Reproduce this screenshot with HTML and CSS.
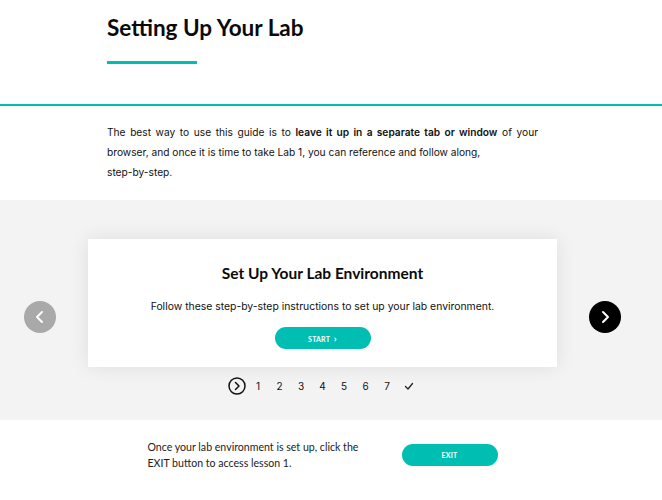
FILE: index.html
```html
<!DOCTYPE html>
<html lang="en">
<head>
  <meta charset="UTF-8" />
  <title>Setting Up Your Lab</title>
  <link rel="stylesheet" href="styles.css">
</head>
<body>
  <!-- Lesson header -->
  <div class="lesson-header">
    <div class="wrap">
      <div class="column">
        <h1>Setting Up Your Lab</h1>
        <div class="title-rule"></div>
      </div>
    </div>
  </div>

  <!-- Intro text -->
  <div class="intro">
    <div class="wrap">
      <p class="column intro-text">The best way to use this guide is to <strong>leave it up in a separate tab or window</strong> of your browser, and once it is time to take Lab 1, you can reference and follow along,<br>step-by-step.</p>
    </div>
  </div>

  <!-- Process carousel -->
  <div class="process">
    <div class="wrap carousel">
      <button class="arrow arrow-prev" aria-label="Previous">
        <svg width="12" height="14" viewBox="0 0 12 14"><polyline points="8,2 3,7 8,12" fill="none" stroke="#fff" stroke-width="2" stroke-linecap="round" stroke-linejoin="round"/></svg>
      </button>
      <div class="slides">
        <div class="card">
          <h2>Set Up Your Lab Environment</h2>
          <p>Follow these step-by-step instructions to set up your lab environment.</p>
          <button class="pill-btn">START <span class="chev">&#x203A;</span></button>
        </div>
        <ul class="steps">
          <li class="step-current">
            <svg width="18" height="18" viewBox="0 0 18 18"><circle cx="9" cy="9" r="8" fill="none" stroke="#111" stroke-width="1.5"/><polyline points="7.5,5.5 11,9 7.5,12.5" fill="none" stroke="#111" stroke-width="1.5" stroke-linecap="round" stroke-linejoin="round"/></svg>
          </li>
          <li>1</li>
          <li>2</li>
          <li>3</li>
          <li>4</li>
          <li>5</li>
          <li>6</li>
          <li>7</li>
          <li>
            <svg width="10" height="10" viewBox="0 0 10 10"><polyline points="1.5,5.5 4,8 8.5,2.5" fill="none" stroke="#222" stroke-width="1.3" stroke-linecap="round" stroke-linejoin="round"/></svg>
          </li>
        </ul>
      </div>
      <button class="arrow arrow-next" aria-label="Next">
        <svg width="12" height="14" viewBox="0 0 12 14"><polyline points="4,2 9,7 4,12" fill="none" stroke="#fff" stroke-width="2" stroke-linecap="round" stroke-linejoin="round"/></svg>
      </button>
    </div>
  </div>

  <!-- Exit row -->
  <div class="finish">
    <div class="wrap finish-row">
      <p class="finish-text">Once your lab environment is set up, click the EXIT button to access lesson 1.</p>
      <button class="pill-btn">EXIT</button>
    </div>
  </div>
</body>
</html>
```

FILE: styles.css
```css
/* Reset */
* {
  margin: 0;
  padding: 0;
  box-sizing: border-box;
}
body {
  font-family: 'Inter', 'Noto Sans', sans-serif;
  color: #111;
  background-color: #fff;
}
.wrap {
  width: 645px;
}
.column {
  width: 431px;
  margin: 0 auto;
}
/* Header */
.lesson-header {
  padding-top: 14px;
  padding-bottom: 40px;
  border-bottom: 2px solid #00bfb2;
}
h1 {
  font-family: 'Lato', sans-serif;
  font-weight: 700;
  font-size: 22.5px;
  line-height: 28px;
  color: #0a0a0a;
}
.title-rule {
  width: 90px;
  height: 3px;
  margin-top: 19px;
  background-color: #00bfb2;
}
/* Intro */
.intro {
  padding: 16px 0 18px;
}
.intro-text {
  font-size: 10.2px;
  line-height: 20px;
  text-align: justify;
}
.intro-text strong {
  font-weight: 600;
}
/* Carousel */
.process {
  background-color: #f3f3f3;
  padding: 39px 0 25px;
}
.carousel {
  display: flex;
  align-items: center;
  justify-content: center;
  gap: 32px;
}
.arrow {
  width: 32px;
  height: 32px;
  border: none;
  border-radius: 50%;
  display: flex;
  align-items: center;
  justify-content: center;
  cursor: pointer;
}
.arrow-prev {
  background-color: #a9a9a9;
}
.arrow-next {
  background-color: #000;
}
.slides {
  width: 469px;
}
.card {
  background-color: #fff;
  box-shadow: 0 0 18px rgba(0, 0, 0, 0.09);
  text-align: center;
  padding: 22px 20px 18px;
}
.card h2 {
  font-family: 'Lato', sans-serif;
  font-weight: 700;
  font-size: 15.5px;
  line-height: 24px;
  color: #0a0a0a;
}
.card p {
  font-size: 10.4px;
  line-height: 20px;
  margin-top: 12px;
}
.pill-btn {
  width: 96px;
  height: 22px;
  border: none;
  border-radius: 11px;
  background-color: #00bfb2;
  color: #fff;
  font-family: 'Lato', sans-serif;
  font-weight: 700;
  font-size: 7px;
  letter-spacing: 0.2px;
  cursor: pointer;
}
.card .pill-btn {
  margin-top: 10px;
}
.chev {
  font-size: 10px;
  margin-left: 2px;
}
.steps {
  list-style: none;
  display: flex;
  justify-content: center;
  margin-top: 10px;
  height: 18px;
}
.steps li {
  width: 21.5px;
  display: flex;
  align-items: center;
  justify-content: center;
  font-size: 10px;
  color: #111;
}
/* Exit row */
.finish {
  padding: 19px 0 20px;
}
.finish-row {
  display: flex;
  align-items: center;
  justify-content: center;
  gap: 40px;
}
.finish-text {
  width: 214px;
  font-family: 'Lato', sans-serif;
  font-size: 10.6px;
  line-height: 16px;
  color: #222;
}
```
